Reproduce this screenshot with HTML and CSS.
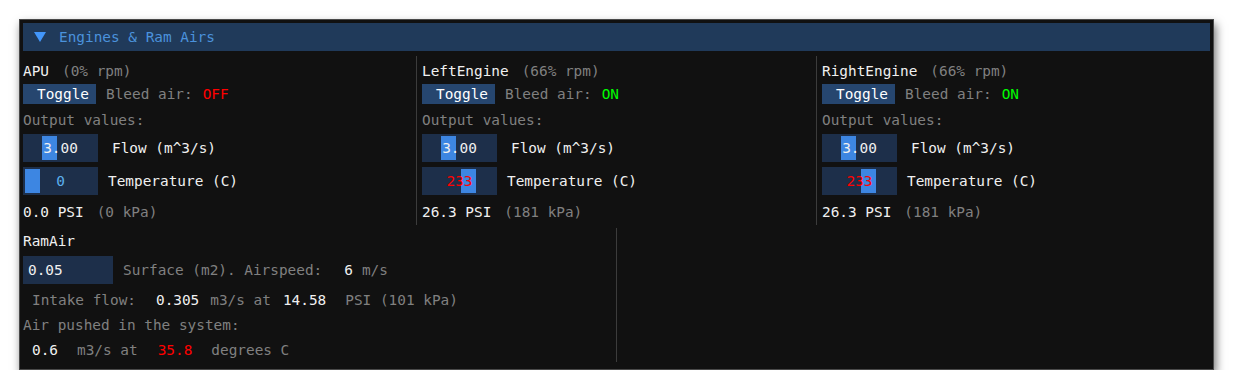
FILE: index.html
```html
<!DOCTYPE html>
<html lang="en">
<head>
    <meta charset="UTF-8">
    <title>Engines &amp; Ram Airs</title>
    <link rel="stylesheet" href="styles.css">
</head>
<body>
    <div class="panel">
        <div class="header">
            <svg class="arrow" width="12" height="10" viewBox="0 0 12 10"><polygon points="0,0 12,0 6,10" fill="#4296fa"/></svg>
            <span class="title">Engines &amp; Ram Airs</span>
        </div>

        <div class="engines">
            <div class="col first">
                <div class="line"><span class="white">APU</span><span class="grey gap-p">(0% rpm)</span></div>
                <div class="toggle-row">
                    <button class="btn">Toggle</button>
                    <span class="grey gap">Bleed air:</span>
                    <span class="red gap">OFF</span>
                </div>
                <div class="line out"><span class="grey">Output values:</span></div>
                <div class="slider-row flow">
                    <div class="frame"><div class="grab" style="left: 19px"></div><span class="val white">3.00</span></div>
                    <span class="white lbl-flow">Flow (m^3/s)</span>
                </div>
                <div class="slider-row temp">
                    <div class="frame"><div class="grab" style="left: 2px"></div><span class="val blue">0</span></div>
                    <span class="white lbl-temp">Temperature (C)</span>
                </div>
                <div class="line psi"><span class="white">0.0 PSI</span><span class="grey gap-p">(0 kPa)</span></div>
            </div>
            <div class="col">
                <div class="line"><span class="white">LeftEngine</span><span class="grey gap-p">(66% rpm)</span></div>
                <div class="toggle-row">
                    <button class="btn">Toggle</button>
                    <span class="grey gap">Bleed air:</span>
                    <span class="green gap">ON</span>
                </div>
                <div class="line out"><span class="grey">Output values:</span></div>
                <div class="slider-row flow">
                    <div class="frame"><div class="grab" style="left: 19px"></div><span class="val white">3.00</span></div>
                    <span class="white lbl-flow">Flow (m^3/s)</span>
                </div>
                <div class="slider-row temp">
                    <div class="frame"><div class="grab" style="left: 39px"></div><span class="val red">233</span></div>
                    <span class="white lbl-temp">Temperature (C)</span>
                </div>
                <div class="line psi"><span class="white">26.3 PSI</span><span class="grey gap-p">(181 kPa)</span></div>
            </div>
            <div class="col last">
                <div class="line"><span class="white">RightEngine</span><span class="grey gap-p">(66% rpm)</span></div>
                <div class="toggle-row">
                    <button class="btn">Toggle</button>
                    <span class="grey gap">Bleed air:</span>
                    <span class="green gap">ON</span>
                </div>
                <div class="line out"><span class="grey">Output values:</span></div>
                <div class="slider-row flow">
                    <div class="frame"><div class="grab" style="left: 19px"></div><span class="val white">3.00</span></div>
                    <span class="white lbl-flow">Flow (m^3/s)</span>
                </div>
                <div class="slider-row temp">
                    <div class="frame"><div class="grab" style="left: 39px"></div><span class="val red">233</span></div>
                    <span class="white lbl-temp">Temperature (C)</span>
                </div>
                <div class="line psi"><span class="white">26.3 PSI</span><span class="grey gap-p">(181 kPa)</span></div>
            </div>
        </div>

        <div class="ramair">
            <div class="col first wide">
                <div class="line"><span class="white">RamAir</span></div>
                <div class="input-row">
                    <div class="input white">0.05</div>
                    <span class="grey gap">Surface (m2). Airspeed:</span>
                    <span class="white speed">6</span>
                    <span class="grey gap-s">m/s</span>
                </div>
                <div class="line indent">
                    <span class="grey">Intake flow:</span>
                    <span class="white g20">0.305</span>
                    <span class="grey g11">m3/s at</span>
                    <span class="white g12">14.58</span>
                    <span class="grey g19">PSI (101 kPa)</span>
                </div>
                <div class="line tight"><span class="grey">Air pushed in the system:</span></div>
                <div class="line tight indent">
                    <span class="white">0.6</span>
                    <span class="grey g19">m3/s at</span>
                    <span class="red g20">35.8</span>
                    <span class="grey g19">degrees C</span>
                </div>
            </div>
            <div class="col last"></div>
        </div>
    </div>
</body>
</html>
```

FILE: styles.css
```css
body {
    margin: 0;
    background-color: white;
    font-family: "DejaVu Sans Mono", "Liberation Mono", monospace;
    font-size: 14.4px;
}
.panel {
    margin: 19px 0 0 19px;
    width: 1187px;
    height: 343px;
    border: 1px solid #4a4a4a;
    padding: 3px;
    background-color: #111111;
    box-shadow: 2px 5px 9px rgba(0, 0, 0, 0.55);
}
.header {
    height: 28px;
    background-color: #203a5a;
    display: flex;
    align-items: center;
}
.arrow {
    margin-left: 11px;
}
.title {
    margin-left: 13px;
    color: #4b92dc;
}
.engines {
    display: flex;
    height: 174px;
}
.col {
    flex-shrink: 0;
    border-left: 1px solid #3c3c3c;
    padding-left: 5px;
    width: 394px;
    margin-top: 5px;
    padding-top: 3px;
}
.col.first {
    border-left: none;
    padding-left: 0;
    width: 393px;
}
.col.last {
    flex: 1;
}
.line {
    height: 24px;
    display: flex;
    align-items: center;
    white-space: pre;
}
.toggle-row {
    height: 20px;
    margin-top: 1px;
    display: flex;
    align-items: center;
}
.btn {
    height: 20px;
    width: 73px;
    border: none;
    padding: 0 0 0 14px;
    text-align: left;
    background-color: #26466f;
    color: white;
    font: inherit;
}
.out {
    margin-top: 4px;
}
.slider-row {
    height: 28px;
    display: flex;
    align-items: center;
}
.flow {
    margin-top: 2px;
}
.temp {
    margin-top: 5px;
}
.psi {
    margin-top: 5px;
}
.frame {
    position: relative;
    width: 75px;
    height: 28px;
    background-color: #1d2f4a;
    display: flex;
    align-items: center;
    justify-content: center;
}
.grab {
    position: absolute;
    top: 2px;
    bottom: 2px;
    width: 15px;
    background-color: #3d86e2;
}
.val {
    position: relative;
}
.lbl-flow {
    margin-left: 14px;
}
.lbl-temp {
    margin-left: 10px;
}
.ramair {
    display: flex;
    height: 137px;
}
.ramair .col {
    margin-top: 3px;
    padding-top: 1px;
}
.ramair .col.wide {
    width: 593px;
}
.input-row {
    height: 28px;
    margin-top: 3px;
    display: flex;
    align-items: center;
}
.input {
    width: 85px;
    height: 28px;
    padding-left: 5px;
    background-color: #1d2f4a;
    display: flex;
    align-items: center;
}
.indent {
    padding-left: 9px;
    margin-top: 4px;
}
.tight {
    margin-top: 1px;
}
.gap {
    margin-left: 10px;
}
.gap-p {
    margin-left: 13px;
}
.gap-s {
    margin-left: 9px;
}
.speed {
    margin-left: 22px;
}
.g11 { margin-left: 11px; }
.g12 { margin-left: 12px; }
.g19 { margin-left: 19px; }
.g20 { margin-left: 20px; }
.white {
    color: #f0f0f0;
}
.grey {
    color: #808080;
}
.red {
    color: #ff0000;
}
.green {
    color: #00ff00;
}
.blue {
    color: #5cb0ee;
}
```
